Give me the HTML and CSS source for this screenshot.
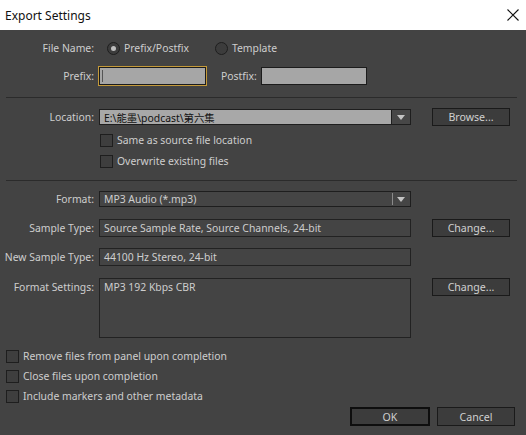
FILE: index.html
```html
<!DOCTYPE html>
<html>
<head>
  <meta charset="utf-8">
  <link rel="stylesheet" href="styles.css">
</head>
<body>
  <div class="titlebar">
    <span class="title">Export Settings</span>
    <svg class="close" width="12" height="12" viewBox="0 0 12 12">
      <path d="M0.5 0.5 L11.5 11.5 M11.5 0.5 L0.5 11.5" stroke="#111" stroke-width="1.1" fill="none"/>
    </svg>
  </div>

  <div class="dialog">
    <div class="row row-filename">
      <div class="label">File Name:</div>
      <label class="radio"><span class="dot checked"></span>Prefix/Postfix</label>
      <label class="radio radio-template"><span class="dot"></span>Template</label>
    </div>

    <div class="row row-prefix">
      <div class="label">Prefix:</div>
      <div class="text-input prefix focused"><span class="caret"></span></div>
      <div class="label-inline">Postfix:</div>
      <div class="text-input postfix"></div>
    </div>

    <div class="separator"></div>

    <div class="row row-location">
      <div class="label">Location:</div>
      <div class="combo light">
        <span class="combo-text">E:\能墨\podcast\第六集</span>
        <span class="combo-arrow"><span class="tri"></span></span>
      </div>
      <button class="btn">Browse...</button>
    </div>

    <div class="row check-row indent first">
      <span class="box"></span>Same as source file location
    </div>
    <div class="row check-row indent">
      <span class="box"></span>Overwrite existing files
    </div>

    <div class="separator second"></div>

    <div class="row row-format">
      <div class="label">Format:</div>
      <div class="combo dark">
        <span class="combo-text">MP3 Audio (*.mp3)</span>
        <span class="combo-arrow"><span class="bar"></span><span class="tri"></span></span>
      </div>
    </div>

    <div class="row row-sample">
      <div class="label">Sample Type:</div>
      <div class="field">Source Sample Rate, Source Channels, 24-bit</div>
      <button class="btn">Change...</button>
    </div>

    <div class="row row-newsample">
      <div class="label">New Sample Type:</div>
      <div class="field">44100 Hz Stereo, 24-bit</div>
    </div>

    <div class="row row-settings">
      <div class="label">Format Settings:</div>
      <div class="field tall">MP3 192 Kbps CBR</div>
      <button class="btn">Change...</button>
    </div>

    <div class="row check-row bottom first">
      <span class="box"></span>Remove files from panel upon completion
    </div>
    <div class="row check-row bottom">
      <span class="box"></span>Close files upon completion
    </div>
    <div class="row check-row bottom">
      <span class="box"></span>Include markers and other metadata
    </div>

    <div class="actions">
      <button class="btn ok">OK</button>
      <button class="btn cancel">Cancel</button>
    </div>
  </div>
</body>
</html>
```

FILE: styles.css
```css
body {
  margin: 0;
  width: 526px;
  height: 435px;
  overflow: hidden;
  font-family: "Noto Sans", "Noto Sans CJK TC", sans-serif;
  font-size: 10.4px;
  background: #434343;
}

.titlebar {
  height: 30px;
  background: white;
  display: flex;
  align-items: center;
  justify-content: space-between;
  padding: 0 7px 0 5px;
}

.title {
  font-size: 12px;
  color: #111;
}

.close {
  display: block;
}

.dialog {
  height: 405px;
  background: #434343;
  color: #cecece;
}

.row {
  display: flex;
  align-items: center;
}

.label {
  width: 99px;
  flex-shrink: 0;
  text-align: right;
  padding-right: 5px;
  box-sizing: border-box;
  white-space: nowrap;
}

.row-filename {
  height: 18px;
  padding-top: 9px;
}

.radio {
  display: flex;
  align-items: center;
  margin-left: 8px;
}

.radio-template {
  margin-left: 26px;
}

.dot {
  width: 11px;
  height: 11px;
  border: 1px solid #1e1e1e;
  border-radius: 50%;
  background: #3c3c3c;
  margin-right: 4px;
  position: relative;
}

.dot.checked:after {
  content: "";
  position: absolute;
  left: 3px;
  top: 3px;
  width: 5px;
  height: 5px;
  border-radius: 50%;
  background: #bdbdbd;
}

.row-prefix {
  height: 18px;
  margin-top: 10px;
}

.text-input {
  height: 16px;
  background: #a6a6a6;
  border: 1px solid #1c1c1c;
  position: relative;
}

.prefix {
  width: 105px;
  outline: 1px solid #c49a3a;
}

.caret {
  position: absolute;
  left: 2px;
  top: 2px;
  width: 1px;
  height: 12px;
  background: #555;
}

.label-inline {
  margin-left: 15px;
  margin-right: 4px;
}

.postfix {
  width: 104px;
}

.separator {
  margin: 12px 9px 0 6px;
  border-top: 1px solid #2b2b2b;
}

.separator.second {
  margin-top: 11px;
}

.row-location {
  height: 18px;
  margin-top: 10px;
}

.combo {
  width: 310px;
  height: 14px;
  border: 1px solid #1e1e1e;
  display: flex;
  align-items: center;
}

.combo.light {
  background: #a8a8a8;
  color: #111;
}

.combo.dark {
  background: #454545;
  color: #cecece;
}

.combo-text {
  flex: 1;
  padding-left: 4px;
  white-space: nowrap;
}

.combo-arrow {
  width: 18px;
  height: 14px;
  display: flex;
  align-items: center;
  justify-content: center;
  position: relative;
}

.combo.light .combo-arrow {
  background: #474747;
  border-left: 1px solid #1e1e1e;
}

.combo-arrow .bar {
  position: absolute;
  left: 0;
  top: 1px;
  width: 1px;
  height: 12px;
  background: #8a8a8a;
}

.tri {
  width: 0;
  height: 0;
  border-left: 4px solid transparent;
  border-right: 4px solid transparent;
  border-top: 5px solid #c4c4c4;
}

.btn {
  width: 78px;
  height: 18px;
  margin-left: 21px;
  padding: 0;
  background: #3c3c3c;
  border: 1px solid #1a1a1a;
  color: #d0d0d0;
  font-family: "Noto Sans", sans-serif;
  font-size: 10.6px;
}

.check-row {
  height: 16px;
}

.check-row.indent {
  margin-top: 5px;
  padding-left: 100px;
}

.check-row.indent.first {
  margin-top: 6px;
}

.box {
  width: 11px;
  height: 11px;
  border: 1px solid #1e1e1e;
  background: #3e3e3e;
  margin-right: 4px;
}

.row-format {
  height: 16px;
  margin-top: 10px;
}

.field {
  width: 306px;
  height: 16px;
  border: 1px solid #222;
  background: #444;
  padding-left: 4px;
  display: flex;
  align-items: center;
  white-space: nowrap;
}

.row-sample {
  height: 18px;
  margin-top: 12px;
}

.row-newsample {
  height: 18px;
  margin-top: 11px;
}

.row-settings {
  margin-top: 12px;
  align-items: flex-start;
}

.row-settings .label {
  margin-top: 2px;
}

.field.tall {
  height: 57px;
  align-items: flex-start;
  padding-top: 1px;
}

.check-row.bottom {
  margin-top: 4px;
  padding-left: 6px;
}

.check-row.bottom.first {
  margin-top: 10px;
}

.actions {
  display: flex;
  justify-content: flex-end;
  padding-right: 11px;
  margin-top: 3px;
}

.actions .btn {
  height: 19px;
  margin-left: 7px;
}

.btn.ok {
  width: 80px;
  border: 2px solid #0e0e0e;
}
```
